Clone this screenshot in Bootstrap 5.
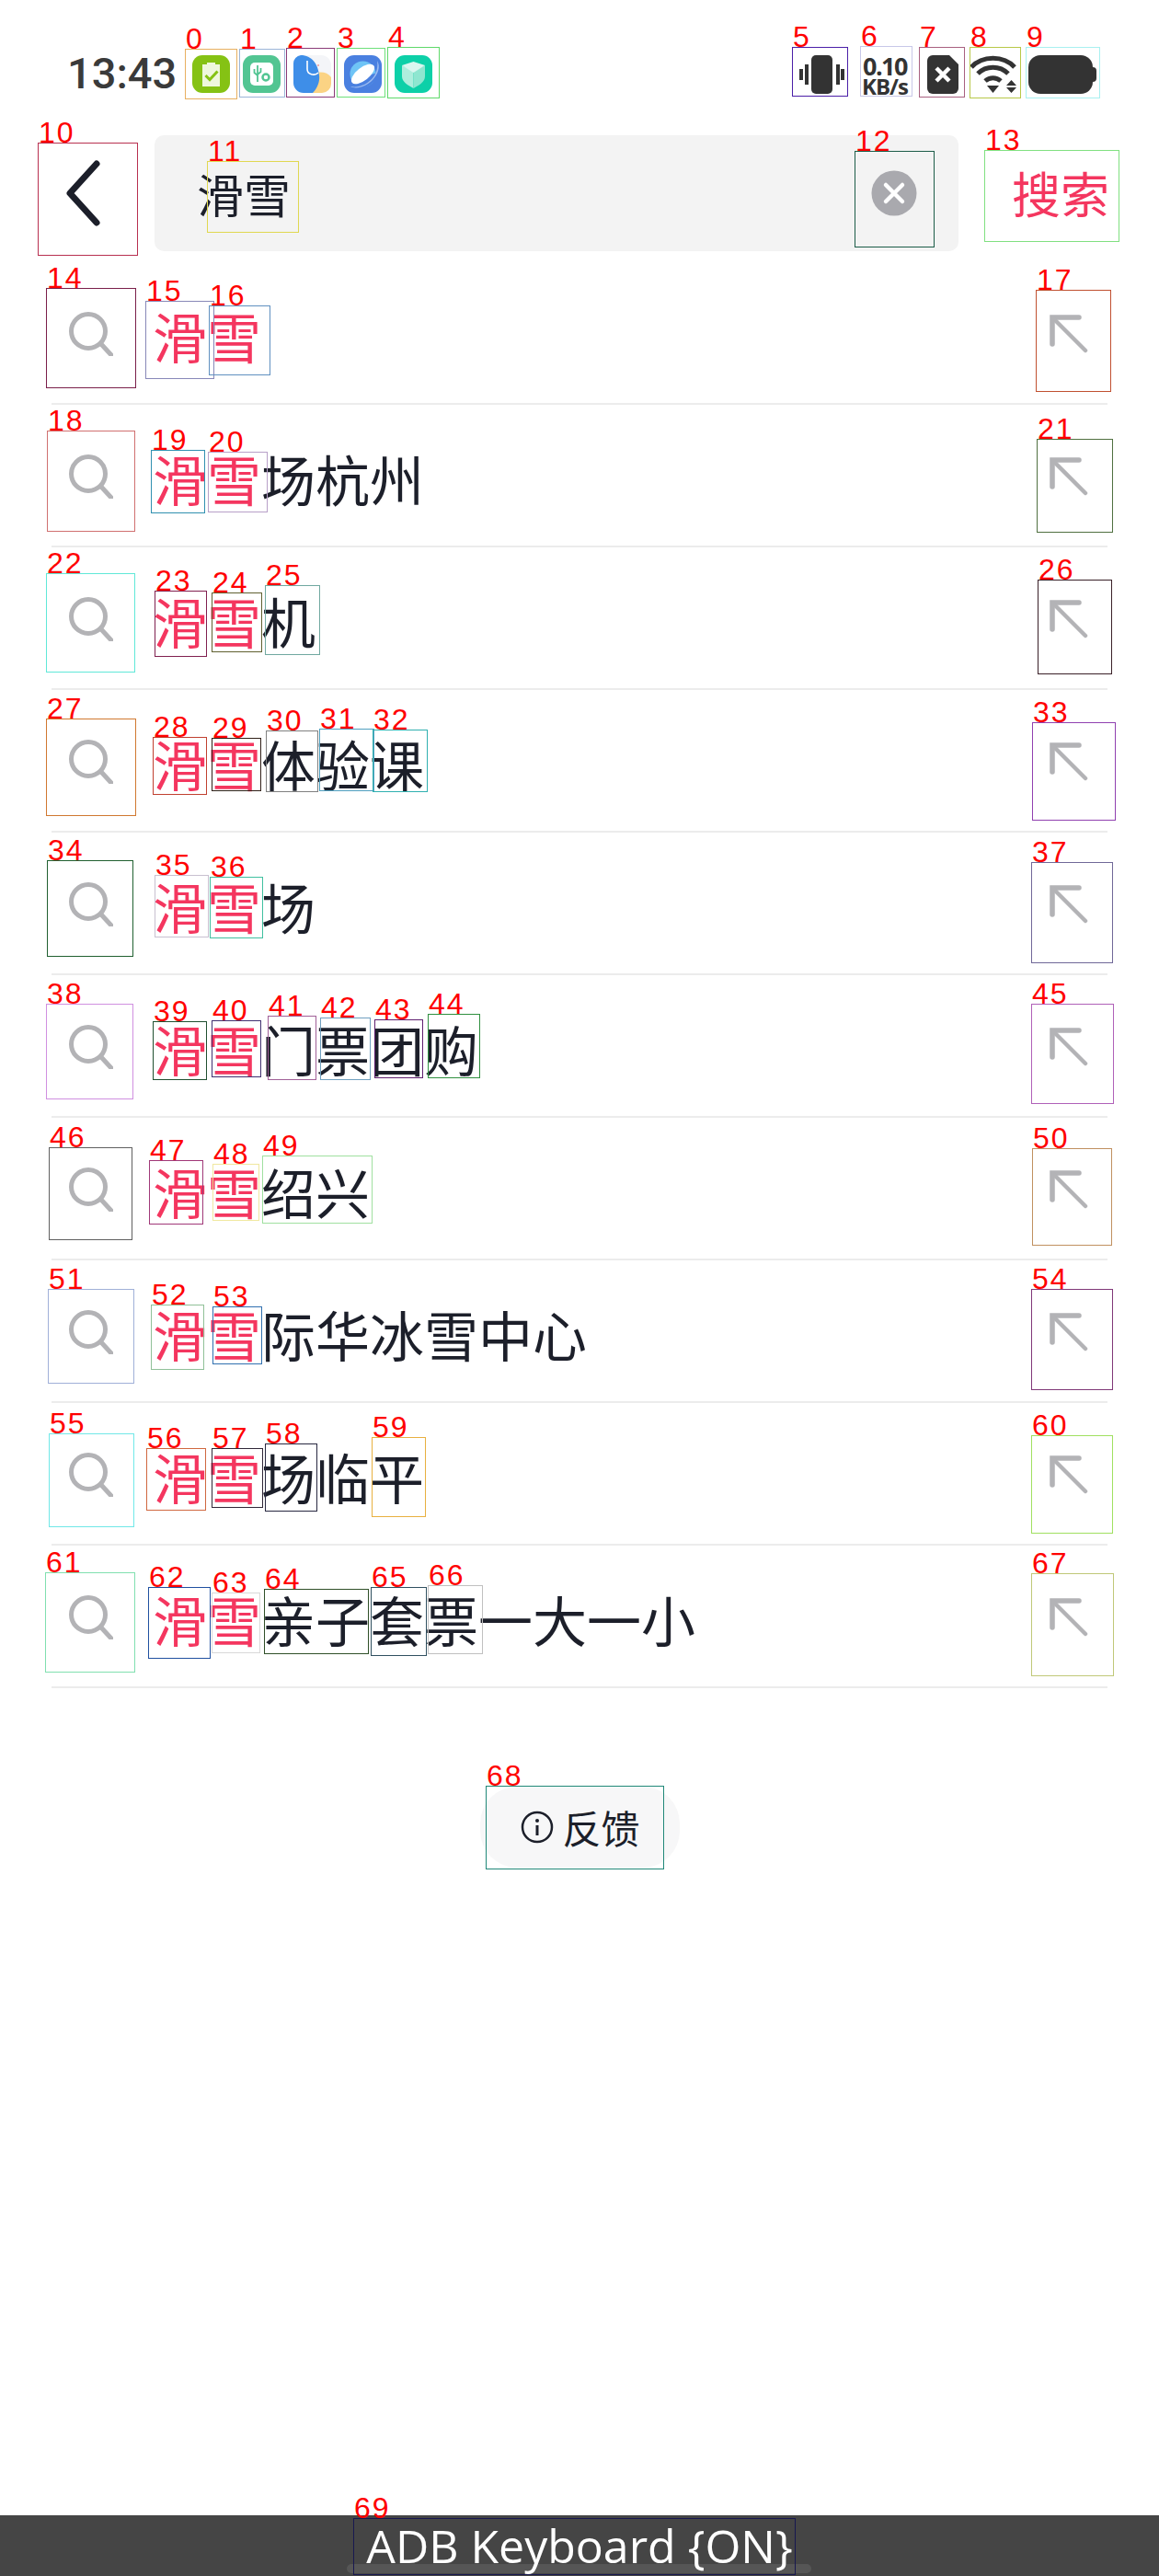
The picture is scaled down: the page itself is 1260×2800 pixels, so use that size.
<!DOCTYPE html>
<html lang="zh-CN">
<head>
  <meta charset="UTF-8" />
  <meta name="viewport" content="width=device-width, initial-scale=1.0"/>
  <title>搜索</title>
  <link href="https://cdn.jsdelivr.net/npm/bootstrap@5.3.2/dist/css/bootstrap.min.css" rel="stylesheet">
  <style>
    body { margin: 0; background: #fff; color: #1c1f2a; font-family: "Noto Sans CJK SC", "Noto Sans", sans-serif; }
    .phone-page { position: relative; width: 1260px; height: 2800px; overflow: hidden; }

    /* status bar */
    .status-row { height: 147px; padding: 59px 67px 0 73px; }
    .status-time { font-family: Roboto, sans-serif; font-weight: 500; font-size: 47px; line-height: 42px; color: #3a3a3a; width: 136px; }
    .app-icon { width: 41px; height: 41px; display: block; }
    .left-icons { gap: 14px; }
    .net-speed { width: 50px; margin-left: 19px; margin-right: 21px; font-family: "Open Sans", sans-serif; font-weight: 700; color: #333; text-align: center; white-space: nowrap; }
    .net-top { font-size: 27px; line-height: 25px; letter-spacing: -1.5px; }
    .net-bottom { font-size: 24px; line-height: 19px; letter-spacing: -1px; margin-left: -2px; margin-right: -2px; }
    .wifi-icon, .battery-icon { margin-left: 12px; }

    /* search row */
    .search-row { height: 126px; margin-bottom: 12px; }
    .back-cell { width: 168px; }
    .back-cell svg { margin-left: 70px; display: block; }
    .search-box { width: 874px; height: 126px; background: #f3f3f3; border-radius: 10px; padding: 0 45px 0 46px; }
    .search-query { font-size: 51px; line-height: 1; }
    .clear-icon { margin-top: -1px; }
    .search-go { font-size: 53px; line-height: 1; color: #f4365f; margin-left: 58px; margin-top: -1px; }

    /* suggestion rows */
    .suggest-list { margin: 0 56px; padding: 0; list-style: none; }
    .suggest-row { height: 155px; border-bottom: 2px solid #ececec; padding: 0 21px 0 19px; }
    .search-glass { margin-top: 3px; }
    .suggest-text { font-size: 59px; line-height: 1; margin-left: 43px; white-space: nowrap; margin-top: 6px; }
    .hit-text { color: #f4365f; }
    .suggest-arrow { margin-top: 3px; }

    /* feedback pill */
    .feedback-pill { width: 217px; height: 88px; margin: 107px auto 0; background: #f7f7f8; border-radius: 40px; font-size: 42px; line-height: 1; gap: 9px; }
    .feedback-pill svg { margin-left: 2px; }

    /* adb ime bar */
    .ime-bar { position: relative; height: 66px; background: #454545; }
    .ime-home { position: absolute; left: 377px; top: 53px; width: 505px; height: 10px; border-radius: 5px; background: #565656; }
    .ime-text { position: relative; font-family: "Open Sans", sans-serif; font-size: 50px; line-height: 66px; color: #fff; }

    /* annotation overlay */
    .anno-box { position: absolute; border: 1px solid; pointer-events: none; }
    .anno-num { position: absolute; font-family: "Liberation Sans", sans-serif; font-size: 32px; letter-spacing: 2px; line-height: 22px; height: 22px; color: #f00; white-space: nowrap; }
  </style>
</head>
<body>
<div class="phone-page d-flex flex-column">

  <!-- Status bar -->
  <div class="status-row d-flex justify-content-between align-items-start">
    <div class="d-flex align-items-center">
      <div class="status-time">13:43</div>
      <div class="left-icons d-flex">
        <svg class="app-icon" viewBox="0 0 41 41"><rect width="41" height="41" rx="11" fill="#85c214"/><path d="M11 10h5V8h9v2h5v24H11z" fill="#eef7dc"/><path d="M14.500 22l4.500 4.500 8.500-9" fill="none" stroke="#85c214" stroke-width="3"/></svg>
        <svg class="app-icon" viewBox="0 0 41 41"><rect width="41" height="41" rx="11" fill="#52c592"/><rect x="8" y="8" width="25" height="25" rx="5" fill="#fff"/><path d="M16 11v18M12.500 15v4l3.500 3M19.500 14v4l-3.500 3" fill="none" stroke="#52c592" stroke-width="1.800"/><circle cx="25" cy="24" r="3.500" fill="none" stroke="#52c592" stroke-width="2.500"/></svg>
        <svg class="app-icon" viewBox="0 0 41 41"><rect width="41" height="41" rx="11" fill="#f4f5f8"/><path d="M41 24V31a10 10 0 0 1-10 10H18V22c8-5 18-5 23 2z" fill="#fbd384"/><path d="M8 0c12 0 19 10 20 22 1 8-3 15-7 19H11A11 11 0 0 1 0 30V9A9 9 0 0 1 8 0z" fill="#3e8ee8"/><path d="M15 6v9c0 6 8 8 12 4" fill="none" stroke="#fff" stroke-width="1.600"/><circle cx="27" cy="11" r="1" fill="#e99"/></svg>
        <svg class="app-icon" viewBox="0 0 41 41"><rect width="41" height="41" rx="11" fill="#4a80e0"/><circle cx="20.500" cy="20.500" r="14" fill="#6fc4f6"/><path d="M8 28c2 6 10 9 17 6s10-8 11-15z" fill="#4a80e0"/><path d="M7 34c9 2 19-3 24-9s6-13 5-19c4 6 1 15-5 21S14 38 7 34z" fill="#9dbcf0"/><ellipse cx="20.500" cy="20.500" rx="15" ry="7" transform="rotate(-38 20.500 20.500)" fill="#fff"/></svg>
        <svg class="app-icon" viewBox="0 0 41 41"><rect width="41" height="41" rx="11" fill="#0dd0a8"/><path d="M8 11v12c0 6 7 10 12.500 13V17z" fill="#aeeedd"/><path d="M33 11v12c0 6-7 10-12.500 13V17z" fill="#8fe6d0"/><path d="M8 11l12.500-4L33 11l-12.500 8z" fill="#daf7f0"/></svg>
      </div>
    </div>
    <div class="d-flex align-items-center">
      <svg width="50" height="42" viewBox="0 0 50 42"><rect x="14" y="0" width="23" height="42" rx="5" fill="#333"/><path d="M9 10v22M43 10v22" stroke="#333" stroke-width="4"/><path d="M3 15v12M48 15v12" stroke="#333" stroke-width="4"/></svg>
      <div class="net-speed">
        <div class="net-top">0.10</div>
        <div class="net-bottom">KB/s</div>
      </div>
      <svg width="34" height="42" viewBox="0 0 34 42"><path d="M6 0h18l10 10v26a6 6 0 0 1-6 6H6a6 6 0 0 1-6-6V6a6 6 0 0 1 6-6z" fill="#333"/><path d="M10 14l14 14M24 14L10 28" stroke="#fff" stroke-width="4.500"/></svg>
      <svg class="wifi-icon" width="52" height="42" viewBox="0 0 52 42"><g fill="none" stroke="#333" stroke-width="5"><path d="M2 13C14 0 37 0 49 13"/><path d="M9 20c9-9 24-9 33 0"/><path d="M17 28c5-4.500 12-4.500 17 0"/></g><path d="M19 33h13l-6.500 8z" fill="#333"/><path d="M40 33l5.500-6 5.500 6zM40 35h11l-5.500 6z" fill="#333"/></svg>
      <svg class="battery-icon" width="75" height="42" viewBox="0 0 75 42"><rect width="70" height="42" rx="13" fill="#333"/><path d="M69 13h1a4 4 0 0 1 4 4v8a4 4 0 0 1-4 4h-1z" fill="#333"/></svg>
    </div>
  </div>

  <!-- Search bar -->
  <div class="search-row d-flex align-items-center">
    <div class="back-cell">
      <svg width="44" height="76" viewBox="0 0 44 76"><path d="M35 6L6 38l29 32" fill="none" stroke="#1c1f2a" stroke-width="7" stroke-linecap="round" stroke-linejoin="round"/></svg>
    </div>
    <div class="search-box d-flex align-items-center justify-content-between">
      <span class="search-query">滑雪</span>
      <svg class="clear-icon" width="50" height="50" viewBox="0 0 50 50"><circle cx="25" cy="25" r="24.500" fill="#a9a9ae"/><path d="M16 16l18 18M34 16L16 34" stroke="#fff" stroke-width="4.500" stroke-linecap="round"/></svg>
    </div>
    <span class="search-go">搜索</span>
  </div>

  <!-- Suggestions, filled from script -->
  <ul class="suggest-list" id="suggestList"></ul>

  <!-- Feedback -->
  <div class="feedback-pill d-flex align-items-center justify-content-center">
    <svg width="36" height="36" viewBox="0 0 36 36"><circle cx="18" cy="18" r="16" fill="none" stroke="#1c1f2a" stroke-width="2.500"/><circle cx="18" cy="11" r="2" fill="#1c1f2a"/><path d="M18 16v11" stroke="#1c1f2a" stroke-width="3"/></svg>
    <span>反馈</span>
  </div>

  <!-- ADB keyboard bar -->
  <div class="ime-bar mt-auto text-center">
    <div class="ime-home"></div>
    <div class="ime-text">ADB Keyboard {ON}</div>
  </div>

  <!-- Annotation overlay, filled from script -->
  <div id="annoLayer"></div>
</div>

<script src="https://cdn.jsdelivr.net/npm/bootstrap@5.3.2/dist/js/bootstrap.bundle.min.js"></script>
<script>
  // rest of each suggestion after the highlighted 滑雪
  const suggestions = ["", "场杭州", "机", "体验课", "场", "门票团购", "绍兴", "际华冰雪中心", "场临平", "亲子套票一大一小"];
  const searchIcon = '<svg class="search-glass" width="48" height="48" viewBox="0 0 48 48" fill="none" stroke="#b3b3b6" stroke-width="5" stroke-linecap="round"><circle cx="21" cy="21" r="18.500"/><path d="M35 35l11 12"/></svg>';
  const arrowIcon = '<svg class="suggest-arrow" width="42" height="42" viewBox="0 0 42 42" fill="none" stroke="#b3b3b6" stroke-width="5.500" stroke-linecap="round"><path d="M3 32V3h29"/><path d="M4 4l35 35" stroke-width="4.500" /></svg>';
  document.getElementById('suggestList').innerHTML = suggestions.map(rest => `
    <li class="suggest-row d-flex align-items-center">
      ${searchIcon}
      <span class="suggest-text"><span class="hit-text">滑雪</span>${rest}</span>
      <span class="ms-auto d-flex">${arrowIcon}</span>
    </li>`).join('');

  // annotation boxes: x1, x2, y1, y2, colour (index = number shown)
  const boxes = [
    [201,257.5,53.3,108.3,'#e8b060'],[259.5,310,53.3,106.3,'#9bb5d8'],[311.4,364.4,52.3,105.7,'#8a3a78'],
    [366.4,418.6,52.3,105.7,'#6ee07a'],[421.4,477.7,50.7,107.3,'#5fd96a'],[861.4,921.7,51.3,104.7,'#4b1fa8'],
    [935.3,991.6,49.7,104.7,'#c8c8e8'],[999.2,1048.6,51.3,105.7,'#a86080'],[1053.5,1109.7,51.3,106.7,'#b8c848'],
    [1114.5,1195.7,51.3,106.7,'#a8f0f0'],[41.4,149.5,155.3,278.3,'#b83050'],[225.4,325.4,175.3,252.7,'#e0d850'],
    [929.3,1015.7,164.3,269.3,'#1c5c48'],[1069.5,1217.4,163.3,263.3,'#80e080'],[50.2,147.5,312.7,422.3,'#7a1f4a'],
    [158.3,233.4,327.3,412.3,'#8888b8'],[227.4,293.7,331.7,408.3,'#6090c0'],[1126.3,1207.7,314.7,426.4,'#c05030'],
    [51.4,146.6,467.7,578.3,'#d07070'],[163.5,222.6,489.3,558.3,'#3090b0'],[226.2,290.5,490.7,557.3,'#b8a0c8'],
    [1127.3,1209.7,477.4,579,'#507040'],[50.2,146.6,623.3,731.3,'#60e8d8'],[167.5,224.6,642.3,714.3,'#802050'],
    [230.2,284.5,644.3,709.3,'#606030'],[287.7,347.5,636.3,712.3,'#70a8a0'],[1128.3,1208.7,629.5,733,'#3a2028'],
    [50.2,147.5,781.3,887.3,'#d07830'],[165.5,225.4,801.3,864.3,'#c04030'],[230.2,283.6,802.3,860.3,'#302018'],
    [288.5,345.5,794.3,861.3,'#808080'],[347.1,406.6,792.3,860.3,'#50a0c0'],[405.4,465.3,793.3,861.3,'#30b0b0'],
    [1122.3,1213.3,784.6,892.2,'#9040b0'],[51.4,145.4,935.3,1040.3,'#206030'],[167.5,226.6,951.3,1019.3,'#c8c0d0'],
    [228.2,285.7,953.3,1020.3,'#40c0a0'],[1121.3,1209.7,936.6,1047.3,'#706898'],[50.2,145.4,1091.3,1195.3,'#d090e0'],
    [166.3,224.6,1110.3,1174.3,'#205030'],[230.2,283.6,1109.3,1171.3,'#403070'],[290.5,343.5,1104.3,1174.3,'#a06098'],
    [347.5,403.4,1106.3,1174.3,'#70a0c0'],[407.4,460.4,1108.3,1172.3,'#602070'],[465.3,521.5,1102.3,1172.3,'#309040'],
    [1121.3,1210.7,1090.6,1199.8,'#b060b8'],[52.6,144.4,1247.3,1348.2,'#606060'],[161.7,221.4,1261.2,1331,'#a03878'],
    [230.6,281.6,1265.3,1327.3,'#f0e8a0'],[284.7,404.6,1256.3,1330.2,'#a0e0a0'],[1122.3,1208.7,1248.3,1353.9,'#c09060'],
    [51.5,146.4,1401.2,1504,'#a0b0d8'],[164.3,222.4,1418.4,1488.6,'#90c098'],[230.6,284.7,1419.6,1483.3,'#3070b0'],
    [1121.3,1209.7,1401.3,1510.5,'#803878'],[52.6,146.4,1557.6,1660.4,'#70e8e8'],[158.7,223.5,1573.5,1642,'#d06840'],
    [229.6,285.7,1574.3,1639.2,'#302838'],[287.8,345.4,1569.4,1643.3,'#282840'],[403.6,463.3,1562.4,1648.6,'#e8b040'],
    [1121.3,1209.7,1559.5,1666.6,'#a0e060'],[48.5,147.4,1709.4,1818.4,'#80e0b0'],[160.7,228.6,1724.5,1803.3,'#2050a0'],
    [229.6,282.7,1731.4,1797.1,'#d8d8d8'],[286.7,400.5,1726.5,1798.4,'#305028'],[402.6,464.3,1725.3,1800,'#305060'],
    [465.3,524.5,1723.3,1798.4,'#c0c0c0'],[1121.3,1210.7,1709.5,1821.7,'#c0c878'],[528.3,721.7,1941.3,2032.3,'#208878'],
    [384.4,865.3,2737.3,2799,'#181850']
  ];
  const layer = document.getElementById('annoLayer');
  boxes.forEach((b, i) => {
    const x1 = Math.round(b[0]), x2 = Math.round(b[1]), y1 = Math.round(b[2]), y2 = Math.round(b[3]);
    const box = document.createElement('div');
    box.className = 'anno-box';
    box.style.cssText = `left:${x1}px;top:${y1}px;width:${x2 - x1}px;height:${y2 - y1}px;border-color:${b[4]}`;
    layer.appendChild(box);
    const num = document.createElement('div');
    num.className = 'anno-num';
    num.textContent = i;
    num.style.cssText = `left:${x1 + 1}px;top:${y1 - 22}px`;
    layer.appendChild(num);
  });
</script>
</body>
</html>
